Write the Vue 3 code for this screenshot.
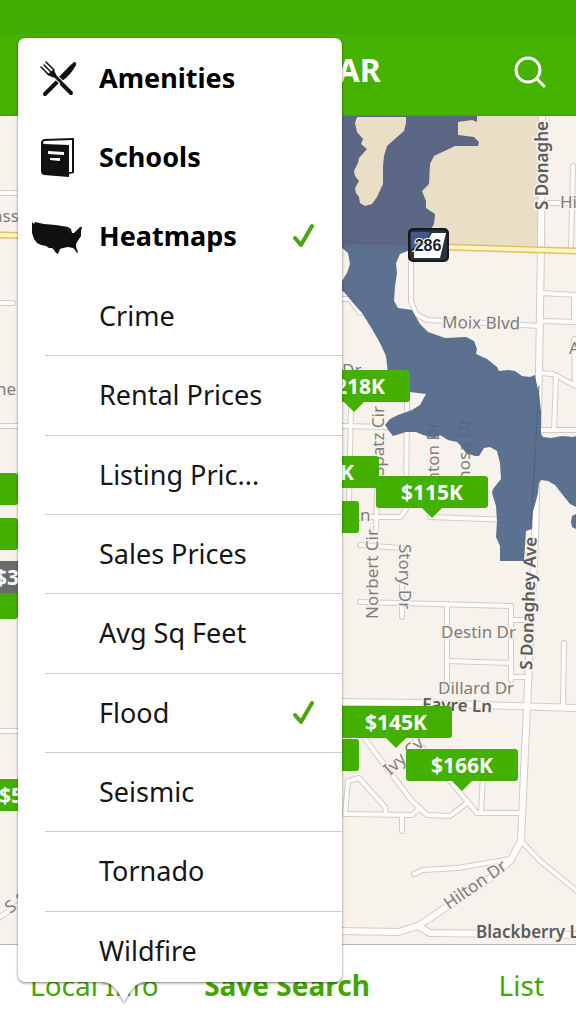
<template>
  <div class="page">

    <!-- Header -->
    <header class="top-bar">
      <h1 class="top-title">Conway, AR</h1>
      <button class="search-button" type="button" aria-label="Search">
        <svg viewBox="0 0 36 36" class="search-icon">
          <circle cx="15" cy="16" r="12" />
          <path d="M24 25l8 8" />
        </svg>
      </button>
    </header>

    <!-- Map -->
    <main class="map">
      <svg class="map-canvas" viewBox="0 115 576 829" preserveAspectRatio="xMidYMin slice">
        <path class="park" d="M342 115H541V245H342Z" />

        <path v-for="road in roads" :key="road" class="road-casing" :d="road" />
        <path v-for="road in mainRoads" :key="road" class="road-casing main" :d="road" />
        <path v-for="road in roads" :key="'f' + road" class="road-fill" :d="road" />
        <path v-for="road in mainRoads" :key="'f' + road" class="road-fill main" :d="road" />
        <path class="highway-casing" d="M0 234L342 243L576 250" />
        <path class="highway-fill" d="M0 234L342 243L576 250" />

        <text
            v-for="label in labels"
            :key="label.id"
            class="road-label"
            :class="{ strong: label.strong }"
            :transform="`translate(${label.x} ${label.y}) rotate(${label.angle})`"
        >{{ label.text }}</text>

        <!-- Flood zone -->
        <path class="flood north" :d="floodNorth" />
        <path class="flood" :d="floodSouth" />
        <path class="flood" d="M576 513L572 515L571 521L572 526L576 528Z" />
        <path class="flood-line" d="M342 241L408 243M539 385L534 475L531 520" />
        <path class="park" :d="island" />

        <!-- Highway shield -->
        <rect x="409" y="228" width="39" height="32" rx="4" class="shield" />
        <path class="shield-face" d="M432 232H446L440 257H414V251H411L426 242Z" />
        <path class="shield-blue" d="M411 231H430L426 242L411 248Z" />
        <text x="428" y="250" class="shield-label">286</text>
      </svg>

      <button
          v-for="pin in pins"
          :key="pin.id"
          type="button"
          class="pin"
          :class="{ seen: pin.seen }"
          :style="{ left: pin.x + 'px', top: pin.y + 'px' }"
      >{{ pin.price }}</button>
    </main>

    <!-- Bottom bar -->
    <footer class="bottom-bar">
      <button type="button" class="bottom-button">Local Info</button>
      <button type="button" class="bottom-button save">Save Search</button>
      <button type="button" class="bottom-button list">List</button>
    </footer>

    <!-- Local info menu -->
    <nav class="menu">
      <div class="menu-panel">
        <ul class="menu-list">
          <li v-for="item in items" :key="item.name" class="menu-item" :class="{ sub: !item.icon }">
            <button type="button" class="menu-button" :aria-pressed="item.checked" @click="item.checked = !item.checked">
              <svg v-if="item.icon === 'amenities'" class="menu-icon" viewBox="0 0 50 40">
                <path class="ink" d="M41 5C42 3 45 4 44 7C41 13 36 19 30 23L26 20C31 15 36 9 41 5Z" />
                <path class="ink-line knife" d="M25 24L13 36" />
                <path class="ink-line tine" d="M9 9L17 17M12 7L19 14M14 4L22 12" />
                <path class="ink" d="M14 15L16 16L21 12L21 11C23 13 23 15 25 18L23 20C20 19 17 18 14 15Z" />
                <path class="gap-line" d="M25 20L29 24" />
                <path class="ink-line fork" d="M23 18L29 24" />
                <path class="ink-line knife" d="M30 26L39 35" />
              </svg>
              <svg v-if="item.icon === 'schools'" class="menu-icon" viewBox="0 0 50 40">
                <path class="ink" d="M12 2L42 1V36L37 37V40L12 38Q9 37 9 34V6Q9 3 12 2Z" />
                <path class="paper" d="M12 4L40 3V35H37V8L12 7Q10 6 12 4Z" />
                <path class="paper" d="M16 14L32 15V18L16 17ZM18 21L28 21V24L18 23Z" />
              </svg>
              <svg v-if="item.icon === 'heatmaps'" class="menu-icon" viewBox="0 0 50 40">
                <path class="ink" d="M0 6L2 8L3 6L12 8L24 9L30 10L36 11L39 13L40 17L42 17L45 14L48 11L50 11L49 15L49 20L47 23L44 28L44 31L46 36L45 37L43 34L41 32L36 31L31 32L28 33L26 38L24 37L22 34L20 32L17 32L14 30L9 29L5 27L2 23L0 17Z" />
              </svg>
              <span class="menu-name">{{ item.name }}</span>
              <svg v-if="item.checked" class="menu-check" viewBox="0 0 24 26">
                <path d="M3 15L9 22L20 3" />
              </svg>
            </button>
          </li>
        </ul>
      </div>
      <svg class="menu-arrow" viewBox="0 0 44 24">
        <path d="M0 0H44V2C34 2 30 8 22 22C14 8 10 2 0 2Z" />
      </svg>
    </nav>

  </div>
</template>

<script setup>

import { ref } from "vue";

const items = ref([
  { name: 'Amenities', icon: 'amenities', checked: false },
  { name: 'Schools', icon: 'schools', checked: false },
  { name: 'Heatmaps', icon: 'heatmaps', checked: true },
  { name: 'Crime', checked: false },
  { name: 'Rental Prices', checked: false },
  { name: 'Listing Pric...', checked: false },
  { name: 'Sales Prices', checked: false },
  { name: 'Avg Sq Feet', checked: false },
  { name: 'Flood', checked: true },
  { name: 'Seismic', checked: false },
  { name: 'Tornado', checked: false },
  { name: 'Wildfire', checked: false },
])

// x / y : tip of the pin, in the map
const pins = [
  { id: 1, price: '$124K', x: -38, y: 400 },
  { id: 2, price: '$139K', x: -38, y: 445 },
  { id: 3, price: '$142K', x: -38, y: 514 },
  { id: 4, price: '$350K', x: 26, y: 488, seen: true },
  { id: 5, price: '$525K', x: 30, y: 706 },
  { id: 6, price: '$218K', x: 354, y: 297 },
  { id: 7, price: '$132K', x: 323, y: 383 },
  { id: 8, price: '$115K', x: 432, y: 403 },
  { id: 9, price: '$97K', x: 303, y: 428 },
  { id: 10, price: '$89K', x: 303, y: 666 },
  { id: 11, price: '$145K', x: 396, y: 633 },
  { id: 12, price: '$166K', x: 462, y: 676 },
]

const labels = [
  { id: 1, text: 'S Donaghe', x: 548, y: 209, angle: -90, strong: true },
  { id: 2, text: 'Hill', x: 560, y: 207, angle: 0 },
  { id: 3, text: 'Moix Blvd', x: 442, y: 327, angle: 1 },
  { id: 4, text: 'Dr', x: 342, y: 375, angle: 0 },
  { id: 5, text: 'Spatz Cir', x: 384, y: 475, angle: -90 },
  { id: 6, text: 'Clinton Dr', x: 439, y: 501, angle: -90 },
  { id: 7, text: 'Mimosa Dr', x: 470, y: 505, angle: -90 },
  { id: 8, text: 'Ln', x: 351, y: 520, angle: 0 },
  { id: 9, text: 'Norbert Cir', x: 378, y: 618, angle: -90 },
  { id: 10, text: 'Story Dr', x: 399, y: 543, angle: 90 },
  { id: 11, text: 'S Donaghey Ave', x: 532, y: 669, angle: -88, strong: true },
  { id: 12, text: 'Destin Dr', x: 441, y: 637, angle: 0 },
  { id: 13, text: 'Dillard Dr', x: 438, y: 693, angle: 0 },
  { id: 14, text: 'Favre Ln', x: 422, y: 709, angle: 2, strong: true },
  { id: 15, text: 'Ivy Cv', x: 390, y: 775, angle: -42 },
  { id: 16, text: 'Hilton Dr', x: 449, y: 909, angle: -35 },
  { id: 17, text: 'Blackberry Ln', x: 476, y: 937, angle: 0, strong: true },
  { id: 18, text: 'A', x: 569, y: 353, angle: 0 },
  { id: 19, text: 'ass', x: -7, y: 221, angle: 0 },
  { id: 20, text: 'he', x: -4, y: 394, angle: 0 },
  { id: 21, text: 'S Salem', x: 10, y: 913, angle: -35 },
]

const mainRoads = [
  'M542 115L541 245L539 370L535 540L530 640L525 750L521 840L510 860L490 877L418 925L398 931L342 930',
  'M342 701L420 702L576 707',
  'M418 925L430 932L576 934',
]

const roads = [
  'M541 202H576',
  'M573 165L571 247',
  'M541 292L576 294',
  'M541 320L576 321',
  'M574 294V320',
  'M541 372L553 373L576 385',
  'M556 375L554 429',
  'M541 429H576',
  'M574 338L575 383',
  'M411 250V300L416 313L427 319L541 325',
  'M342 298H350L360 312',
  'M342 425L430 427',
  'M351 405L349 500',
  'M407 400L406 508L401 516H342',
  'M377 490L376 532',
  'M430 516L534 520',
  'M360 544L402 547',
  'M360 601L511 605V679',
  'M447 605V690',
  'M447 660L510 662',
  'M402 580V616',
  'M511 619H530',
  'M511 676H530',
  'M564 642L563 705',
  'M365 738L412 800L427 814L450 815L467 802',
  'M415 738L477 812H522',
  'M483 775L481 811',
  'M345 813L412 814L420 807',
  'M402 814V830',
  'M345 813L348 780L359 777L385 806L386 813',
  'M414 873L423 869L458 867L510 858',
  'M523 842L540 860L576 889',
  'M0 192H18',
  'M0 302H13',
  'M0 425H18',
  'M0 730H18',
  'M0 916L18 904',
]

const floodNorth = 'M342 115H477V121L472 119L458 121V134L474 136L479 141L478 145L455 145L434 155L430 163L429 183L422 190L426 200V207L435 213L434 223L431 228L428 245H342Z'
const floodSouth = 'M342 245H425L420 250L410 249L400 253L396 262L397 272L395 285L394 300L398 307L412 309L420 323L428 331L445 337L466 336L474 340L477 348L476 353L487 358L497 366L499 370L508 369L515 370L522 375L530 376L535 374L536 380L539 392L541 410V433L543 436L551 437L562 435L573 436L576 435V506L570 503L562 493L555 484L548 480L541 479L539 482L538 492L536 500L533 510L532 528L526 530L524 560H500V545L496 536L497 520L496 505L492 492L493 488L501 478L500 462L497 450L490 446L484 447L479 455L475 455L466 452L461 445L457 441L448 439L440 434L434 437L423 434L416 431L406 431L393 435L389 430L385 424L390 418L398 414L412 409L420 404L426 393L410 391L388 372L386 355L380 342L372 328L362 312L354 303L344 291L342 290V280L347 272L350 263L348 252L342 247Z'
const island = 'M357 116L355 122L357 131L363 138L361 143L367 148L359 157L358 162L354 170L355 175L359 180L355 187L356 192L359 196L360 202L365 205L372 203L377 196L383 183L383 165L384 155L387 145L396 137L404 130L406 122V116Z'

</script>

<style>
body {
  margin: 0;
}
</style>

<style scoped>

.page {
  position: relative;
  display: flex;
  flex-direction: column;
  min-height: 100vh;
  overflow: hidden;
  font-family: "Noto Sans", "Open Sans", sans-serif;
  background-color: #ffffff;
}

button {
  margin: 0;
  padding: 0;
  border: none;
  background: none;
  font-family: inherit;
  cursor: pointer;
}

/* --- HEADER --- */
.top-bar {
  display: grid;
  grid-template-columns: 1fr auto 1fr;
  align-items: center;
  box-sizing: border-box;
  height: 116px;
  padding: 34px 27px 10px;
  background: linear-gradient(#42ad02 34px, #45b200 34px);
  border-bottom: 1px solid #4c9a1c;
}

.top-title {
  grid-column: 2;
  margin: 0;
  font-size: 32px;
  line-height: 40px;
  font-weight: 700;
  color: #ffffff;
}

.search-button {
  justify-self: end;
  height: 32px;
}

.search-icon {
  display: block;
  width: 36px;
  height: 36px;
  fill: none;
  stroke: #ffffff;
  stroke-width: 3;
}

/* --- MAP --- */
.map {
  position: relative;
  flex: 1;
  overflow: hidden;
  background-color: #f7f3ec;
}

.map-canvas {
  position: absolute;
  inset: 0;
  width: 100%;
  height: 100%;
}

.park {
  fill: #eadec6;
}

.road-casing,
.road-fill,
.highway-casing,
.highway-fill {
  fill: none;
  stroke-linejoin: round;
  stroke-linecap: round;
}

.road-casing {
  stroke: #d0cdc8;
  stroke-width: 6;
}

.road-casing.main {
  stroke-width: 8;
}

.road-fill {
  stroke: #fdfcfa;
  stroke-width: 4;
}

.road-fill.main {
  stroke-width: 6;
}

.highway-casing {
  stroke: #e9bd62;
  stroke-width: 7;
}

.highway-fill {
  stroke: #fff6c0;
  stroke-width: 4;
}

.road-label {
  font-size: 17px;
  fill: #7d7d7d;
  stroke: #f7f3ec;
  stroke-width: 3;
  paint-order: stroke;
}

.road-label.strong {
  font-weight: 600;
  fill: #5c5c5c;
}

.flood {
  fill: #526789;
  fill-opacity: 0.94;
}

.flood.north {
  fill: #526080;
}

.flood-line {
  fill: none;
  stroke: #4d6280;
  stroke-width: 1;
}

.shield {
  fill: #2b2f36;
  stroke: #15181d;
  stroke-width: 2;
}

.shield-face {
  fill: #ffffff;
}

.shield-blue {
  fill: #40598a;
}

.shield-label {
  font-family: "Liberation Sans", sans-serif;
  font-size: 16px;
  font-weight: 700;
  text-anchor: middle;
  fill: #222222;
  stroke: #ffffff;
  stroke-width: 2;
  paint-order: stroke;
}

.pin {
  position: absolute;
  width: 112px;
  height: 32px;
  border-radius: 3px;
  margin: -43px 0 0 -56px;
  background-color: #43b000;
  color: #ffffff;
  font-size: 21px;
  line-height: 32px;
  font-weight: 700;
}

.pin::after {
  content: "";
  position: absolute;
  top: 100%;
  left: 50%;
  margin-left: -10px;
  border: 10px solid transparent;
  border-top-color: #43b000;
  border-bottom: none;
}

.pin.seen {
  background-color: #6b6b6b;
}

.pin.seen::after {
  border-top-color: #6b6b6b;
}

/* --- BOTTOM BAR --- */
.bottom-bar {
  display: grid;
  grid-template-columns: 1fr auto 1fr;
  align-items: center;
  box-sizing: border-box;
  height: 80px;
  padding: 0 32px 0 30px;
  border-top: 1px solid #b5b5b5;
  background-color: #ffffff;
}

.bottom-button {
  justify-self: start;
  font-size: 28px;
  line-height: 36px;
  color: #45a500;
}

.bottom-button.save {
  font-weight: 700;
}

.bottom-button.list {
  justify-self: end;
}

/* --- MENU --- */
.menu {
  position: absolute;
  top: 38px;
  bottom: 42px;
  left: 18px;
  width: 324px;
}

.menu-panel {
  display: flex;
  height: 100%;
  overflow: hidden;
  border-radius: 7px;
  background-color: #ffffff;
  box-shadow: 0 1px 3px rgba(0, 0, 0, 0.5);
}

/* The list runs a little past the panel, the last row is cut */
.menu-list {
  flex: 1;
  display: grid;
  grid-auto-rows: 1fr;
  margin: 0 0 -8px;
  padding: 0;
  list-style: none;
}

.menu-item {
  display: flex;
}

.menu-item.sub {
  margin-left: 27px;
}

.menu-item.sub + .menu-item.sub {
  border-top: 1px solid #cfcfcf;
}

.menu-button {
  flex: 1;
  display: flex;
  align-items: center;
  padding: 0 26px 0 14px;
  font-size: 27px;
  line-height: 36px;
  font-weight: 700;
  color: #000000;
  text-align: left;
}

.sub .menu-button {
  padding-left: 54px;
  font-weight: 400;
  color: #161616;
}

.menu-icon {
  width: 50px;
  height: 40px;
  margin-right: 17px;
}

.ink {
  fill: #111111;
}

.paper {
  fill: #ffffff;
}

.ink-line,
.gap-line {
  fill: none;
  stroke: #111111;
  stroke-linecap: round;
}

.ink-line.tine {
  stroke-width: 1.6;
}

.ink-line.fork {
  stroke-width: 3;
}

.ink-line.knife {
  stroke-width: 4;
}

.gap-line {
  stroke: #ffffff;
  stroke-width: 5;
}

.menu-name {
  flex: 1;
}

.menu-check {
  width: 24px;
  height: 26px;
  fill: none;
  stroke: #4aa510;
  stroke-width: 4;
  stroke-linecap: round;
  stroke-linejoin: round;
}

.menu-arrow {
  position: absolute;
  top: 100%;
  left: 84px;
  width: 44px;
  height: 24px;
  margin-top: -2px;
  fill: #ffffff;
  filter: drop-shadow(0 2px 1px rgba(0, 0, 0, 0.35));
}

</style>
